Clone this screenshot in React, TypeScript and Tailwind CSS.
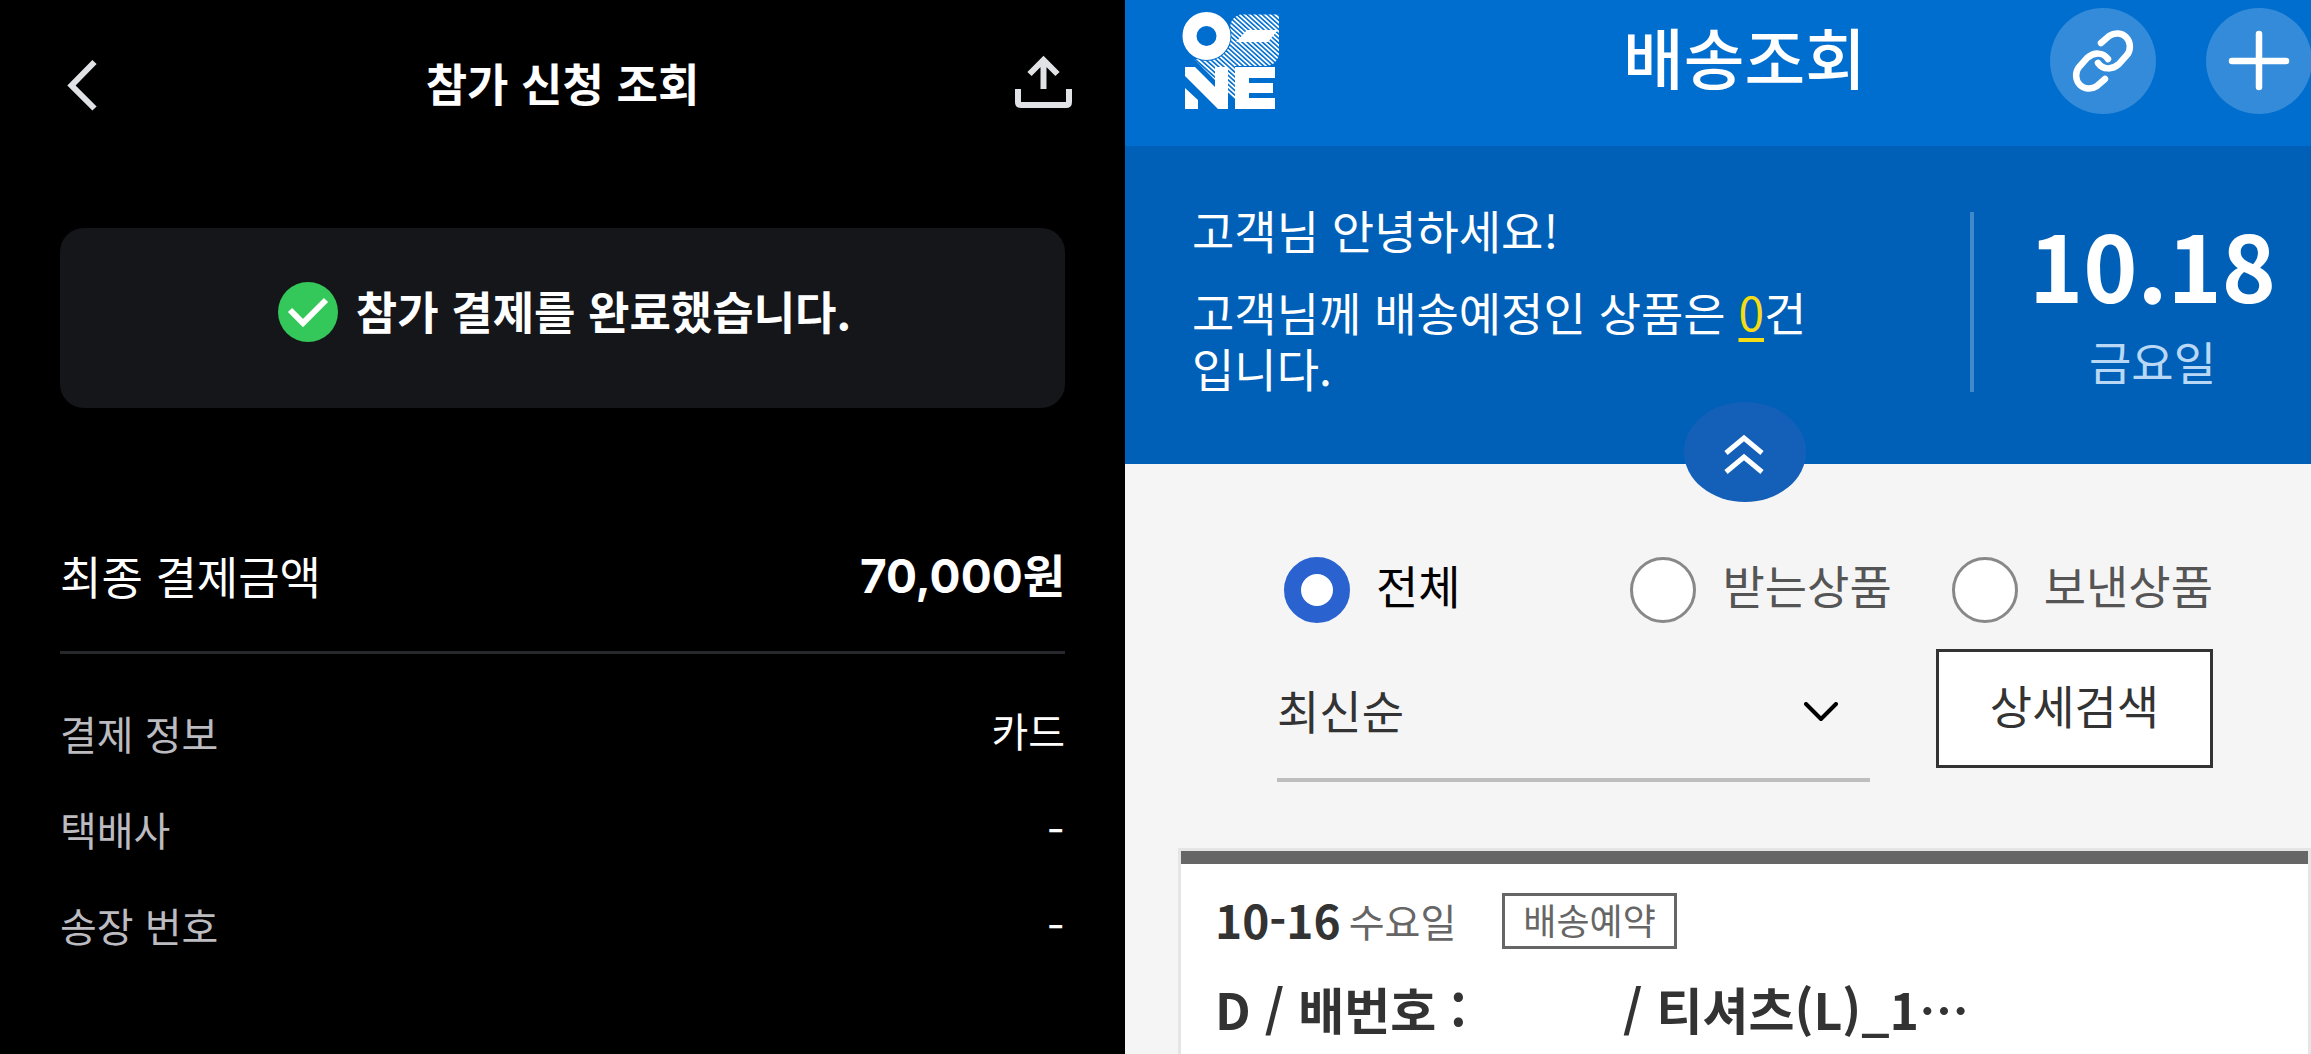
import { useState } from 'react';

const paymentRows = [
  { label: '결제 정보', value: '카드' },
  { label: '택배사', value: '-' },
  { label: '송장 번호', value: '-' },
];

const filters = [
  { id: 'all', label: '전체' },
  { id: 'received', label: '받는상품' },
  { id: 'sent', label: '보낸상품' },
];

const OneLogo = () => (
  <svg viewBox="0 0 98 98" className="size-[98px]" role="img" aria-label="ONE">
    <defs>
      <pattern id="hatch" width="3.4" height="3.4" patternUnits="userSpaceOnUse" patternTransform="rotate(42)">
        <rect width="3.4" height="1.8" fill="#fff" />
      </pattern>
    </defs>
    <path d="M58 2.500H97V42Q95 52 86 54H53V88L12 47H30L48 34V16Q48 6 58 2.500Z" fill="url(#hatch)" />
    <path d="M54 30L65 18H96L86 30Z" fill="#fff" />
    <circle cx="24.500" cy="24" r="25" fill="#006ecf" />
    <circle cx="24.500" cy="24" r="17" fill="none" stroke="#fff" strokeWidth="14" />
    <path d="M3 55H13L33 75V55H46V97H36L3 64ZM3 76L16 88V97H3Z" fill="#fff" />
    <path d="M53 55H93V66H67V71H91V81H67V86H93V97H53Z" fill="#fff" />
  </svg>
);

const PaymentPanel = () => (
  <section className="bg-black text-white">
    <header className="flex items-start justify-between pt-[51px] pr-[52px] pl-[60px]">
      <button aria-label="뒤로">
        <svg viewBox="0 0 60 66" className="h-[66px] w-[60px]" fill="none" stroke="#e1e2e6" strokeWidth="6">
          <path d="M34.500 11L11.500 34.500L34.500 57.500" />
        </svg>
      </button>
      <h1 className="pr-2 text-[45px] leading-[64px] font-bold">참가 신청 조회</h1>
      <button aria-label="공유">
        <svg viewBox="0 0 60 66" className="h-[66px] w-[60px]" fill="none" stroke="#e1e2e6" strokeWidth="6">
          <path d="M5 38V51Q5 54 8 54H53Q56 54 56 51V38M30.500 38V10M16.500 23L30.500 9L44.500 23" />
        </svg>
      </button>
    </header>

    <div className="mx-[60px] mt-[111px] flex h-[180px] items-start justify-center gap-[18px] rounded-3xl bg-[#15161a] pt-[54px] pl-1">
      <svg viewBox="0 0 60 60" className="size-[60px]">
        <circle cx="30" cy="30" r="30" fill="#34c759" />
        <path d="M12 28L25 41L48 18" fill="none" stroke="#fff" strokeWidth="6" />
      </svg>
      <p className="text-[45px] leading-[58px] font-bold">참가 결제를 완료했습니다.</p>
    </div>

    <div className="mx-[60px] mt-[136px] flex items-center justify-between border-b-[3px] border-[#27282b] pb-[43px] text-[45px] leading-[64px]">
      <span>최종 결제금액</span>
      <strong className="font-[Inter,'Noto_Sans_CJK_KR',sans-serif] text-[46px] font-bold">70,000원</strong>
    </div>

    <dl className="mx-[60px] mt-[51px] flex flex-col gap-10 text-[40px] leading-[56px]">
      {paymentRows.map((row) => (
        <div key={row.label} className="flex justify-between">
          <dt className="text-[#bbbbc0]">{row.label}</dt>
          <dd className="font-[Inter,'Noto_Sans_CJK_KR',sans-serif]">{row.value}</dd>
        </div>
      ))}
    </dl>
  </section>
);

const DeliveryPanel = () => {
  const [filter, setFilter] = useState('all');

  return (
    <section className="overflow-hidden bg-[#f5f5f5]">
      <header className="grid h-[146px] grid-cols-[1fr_auto_1fr] bg-[#006ecf] pt-2 pl-[53px] text-white">
        <a href="#" className="mt-1 ml-1 self-start">
          <OneLogo />
        </a>
        <h1 className="text-[66px] leading-[94px] font-medium">배송조회</h1>
        <div className="-mr-px flex items-start justify-end gap-[50px]">
          <button aria-label="링크" className="size-[106px] rounded-full bg-[#338bd9]">
            <svg viewBox="0 0 106 106" className="size-[106px]" fill="none" stroke="#fff" strokeWidth="6.500" strokeLinecap="round">
              <path d="M51 35L59 28C65 24 72 25 76 29C81 34 81 42 77 47L69 56C62 62 53 62 48 55" />
              <path d="M55 71L47 78C41 82 34 81 30 77C25 72 25 64 29 59L37 50C44 44 53 44 58 51" />
            </svg>
          </button>
          <button aria-label="추가" className="size-[106px] rounded-full bg-[#338bd9]">
            <svg viewBox="0 0 106 106" className="size-[106px]" stroke="#fff" strokeWidth="6.500" strokeLinecap="round">
              <path d="M53 26V79M26 53H80" />
            </svg>
          </button>
        </div>
      </header>

      <div className="relative flex h-[318px] bg-[#0060b7] pt-[66px] pl-[67px] text-[46px] text-white">
        <div className="-mt-[11px] flex-1 leading-[56px]">
          <p>고객님 안녕하세요!</p>
          <p className="mt-[26px]">
            고객님께 배송예정인 상품은 <a href="#" className="text-[#f5dc14] underline decoration-4 underline-offset-[7px]">0</a>건
            <br />
            입니다.
          </p>
        </div>
        <div className="flex h-[180px] w-[341px] flex-col items-center border-l-4 border-[#408acb] pl-5">
          <strong className="text-[92px] leading-[102px] font-bold">10.18</strong>
          <span className="mt-3 leading-[68px] text-[#b8d8f5]">금요일</span>
        </div>
        <button aria-label="접기" className="absolute -bottom-[38px] left-1/2 h-[100px] w-[122px] -translate-x-[34px] rounded-[50%] bg-[#1460b8]">
          <svg viewBox="0 0 122 100" className="h-[100px] w-[122px]" fill="none" stroke="#fff" strokeWidth="5">
            <path d="M42 51L60 36L78 51M42 70L60 55L78 70" />
          </svg>
        </button>
      </div>

      <form className="pr-[98px] pl-[152px] text-[46px] text-[#333]">
        <fieldset className="flex pt-[93px] pl-[7px]">
          {filters.map((item, i) => (
            <label key={item.id} className={`flex items-center gap-[26px] ${i === 0 ? 'mr-auto text-black' : 'text-[#555]'} ${i === 2 ? 'ml-[60px]' : ''}`}>
              <input
                type="radio"
                name="filter"
                checked={filter === item.id}
                onChange={() => setFilter(item.id)}
                className="size-[66px] appearance-none rounded-full border-[3px] border-[#888] bg-white checked:border-[17px] checked:border-[#2a63d0]"
              />
              <span className="-mt-3 leading-[66px]">{item.label}</span>
            </label>
          ))}
        </fieldset>
        <div className="mt-[26px] flex items-start justify-between gap-[66px]">
          <div className="relative flex-1">
            <select aria-label="정렬" className="block h-[133px] w-full appearance-none border-b-4 border-[#bebebe] pb-2">
              <option>최신순</option>
            </select>
            <svg viewBox="0 0 34 20" className="pointer-events-none absolute top-[53px] right-8 h-5 w-[34px]" fill="none" stroke="#000" strokeWidth="4" strokeLinecap="round" strokeLinejoin="round">
              <path d="M2 2L17 17L32 2" />
            </svg>
          </div>
          <button type="button" className="h-[119px] w-[277px] border-[3px] border-[#333] bg-white pb-2">
            상세검색
          </button>
        </div>
      </form>

      <article className="mt-[66px] ml-[53px] border-[3px] border-[#e5e5e5] bg-white">
        <div className="border-t-[13px] border-[#666] px-[34px] pt-[29px] text-[#333]">
          <div className="flex items-start">
            <strong className="text-[46px] leading-[52px] font-bold">10-16</strong>
            <span className="ml-2 text-[39px] leading-[54px] text-[#666]">수요일</span>
            <span className="ml-[46px] border-[3px] border-[#666] px-[18px] pb-1 text-[36px] leading-[46px] text-[#666]">배송예약</span>
          </div>
          <h2 className="mt-[22px] flex pb-6 text-[50px] leading-[74px] font-bold whitespace-nowrap">
            <span className="w-[408px]">D / 배번호 :</span>
            <span>/ 티셔츠(L)_1⋯</span>
          </h2>
        </div>
      </article>
    </section>
  );
};

const App = () => (
  <main lang="ko" className="grid h-screen grid-cols-[1125fr_1186fr] overflow-hidden font-['Noto_Sans_CJK_KR',sans-serif]">
    <PaymentPanel />
    <DeliveryPanel />
  </main>
);

export default App;
